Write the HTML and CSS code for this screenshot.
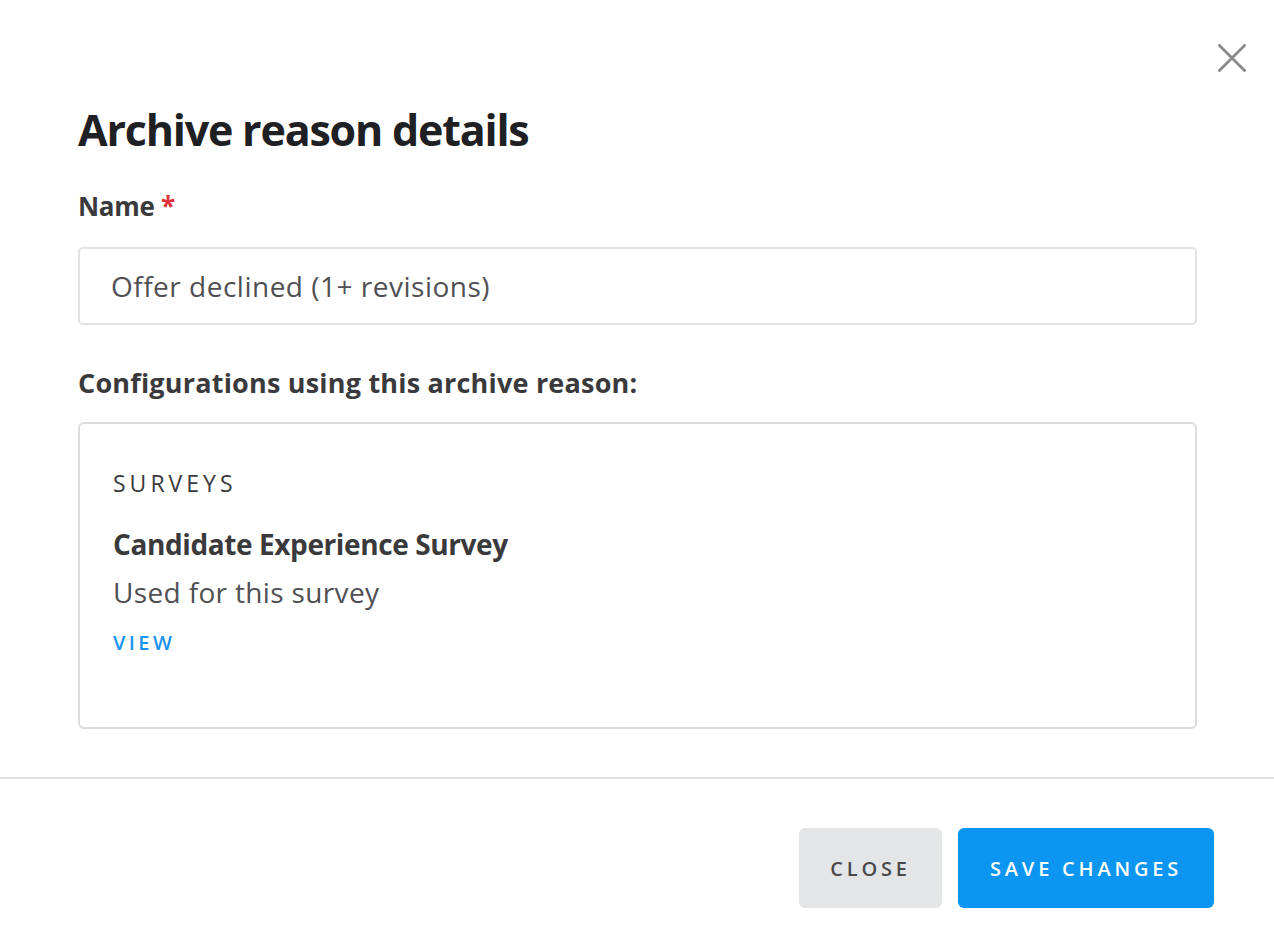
FILE: index.html
```html
<!DOCTYPE html>
<html lang="en">
<head>
<meta charset="utf-8">
<title>Archive reason details</title>
<link rel="stylesheet" href="styles.css">
</head>
<body>
<div class="modal">
  <button class="close-x" aria-label="Close">
    <svg width="28" height="28" viewBox="0 0 28 28"><path d="M1.5 1.5 L26.5 26.5 M26.5 1.5 L1.5 26.5" stroke="#8a8a8a" stroke-width="2.8" stroke-linecap="square" fill="none"/></svg>
  </button>
  <div class="body">
    <h1 class="title">Archive reason details</h1>
    <label class="label">Name <span class="req">*</span></label>
    <div class="input">Offer declined (1+ revisions)</div>
    <div class="label label-config">Configurations using this archive reason:</div>
    <div class="card">
      <div class="eyebrow">SURVEYS</div>
      <div class="card-title">Candidate Experience Survey</div>
      <div class="card-sub">Used for this survey</div>
      <a class="view">VIEW</a>
    </div>
  </div>
  <div class="footer">
    <button class="btn btn-close">CLOSE</button>
    <button class="btn btn-save">SAVE CHANGES</button>
  </div>
</div>
</body>
</html>
```
FILE: styles.css
```css
* { box-sizing: border-box; }
html, body { margin: 0; padding: 0; background: #fff; }
body { font-family: "Open Sans", "Noto Sans", sans-serif; color: #3a3a3c; }
.modal { position: relative; width: 1274px; height: 952px; display: flex; flex-direction: column; }
.close-x { position: absolute; top: 44px; left: 1218px; width: 28px; height: 28px; padding: 0; border: 0; background: none; }
.close-x svg { display: block; }
.body { padding: 102px 77px 0 78px; display: flex; flex-direction: column; }
.title { margin: 0; font-size: 43px; line-height: 56px; font-weight: 700; color: #1f2023; letter-spacing: -1.2px; }
.label { margin-top: 32px; font-size: 26px; line-height: 32px; font-weight: 700; color: #3a3a3c; letter-spacing: -0.3px; }
.req { color: #e0333b; }
.input { margin-top: 25px; height: 78px; border: 2px solid #e3e3e3; border-radius: 5px; padding: 0 31px; display: flex; align-items: center; font-size: 28px; color: #505053; letter-spacing: 0.5px; }
.label-config { margin-top: 42px; font-size: 27px; letter-spacing: 0.2px; }
.card { margin-top: 23px; border: 2px solid #dcdcdc; border-radius: 6px; padding: 44px 33px 69px; display: flex; flex-direction: column; align-items: flex-start; }
.eyebrow { font-size: 23px; line-height: 30px; letter-spacing: 4px; color: #3a3a3c; font-weight: 500; }
.card-title { margin-top: 26px; font-size: 28px; line-height: 40px; font-weight: 700; color: #3a3a3c; letter-spacing: -0.4px; }
.card-sub { margin-top: 8px; font-size: 28px; line-height: 40px; color: #505053; letter-spacing: 0.35px; }
.view { margin-top: 16px; font-size: 20px; line-height: 30px; letter-spacing: 3.4px; color: #1a93ef; font-weight: 600; }
.footer { margin-top: 48px; border-top: 2px solid #dedede; padding: 49px 60px 0 0; display: flex; justify-content: flex-end; gap: 16px; }
.btn { height: 80px; border: 0; border-radius: 6px; font-family: "Open Sans", "Noto Sans", sans-serif; font-size: 20px; font-weight: 600; letter-spacing: 3.8px; padding: 0; }
.btn-close { width: 143px; background: #e4e5e7; color: #4a4a4c; }
.btn-save { width: 256px; background: #0d95f2; color: #fff; }
```
